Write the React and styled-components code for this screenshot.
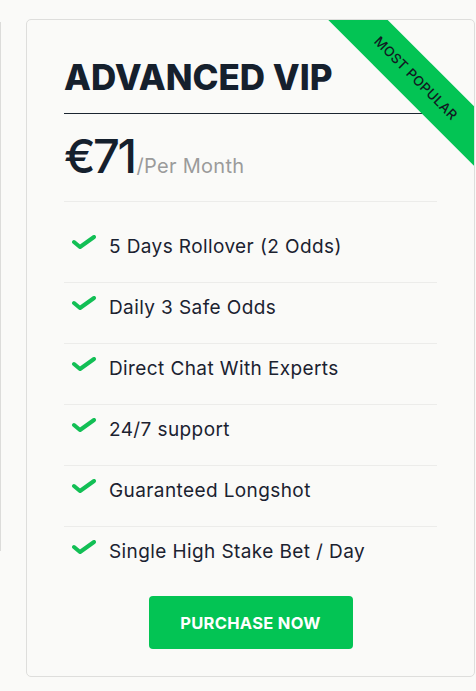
import React from "react";
import styled, { createGlobalStyle } from "styled-components";

const features = [
  "5 Days Rollover (2 Odds)",
  "Daily 3 Safe Odds",
  "Direct Chat With Experts",
  "24/7 support",
  "Guaranteed Longshot",
  "Single High Stake Bet / Day",
];

export default function App() {
  return (
    <>
      <GlobalStyle />
      <Page>
        <PrevCard />
        <Card>
          <Ribbon>MOST POPULAR</Ribbon>
          <Title>ADVANCED VIP</Title>
          <PriceRow>
            <Amount>€71</Amount>
            <Period>/Per Month</Period>
          </PriceRow>
          <FeatureList>
            {features.map((f) => (
              <Feature key={f}>
                <Check viewBox="0 0 26 14">
                  <polyline points="3,7 9,12 23,2" />
                </Check>
                <span>{f}</span>
              </Feature>
            ))}
          </FeatureList>
          <ButtonRow>
            <Button>PURCHASE NOW</Button>
          </ButtonRow>
        </Card>
      </Page>
    </>
  );
}

const GlobalStyle = createGlobalStyle`
  body {
    margin: 0;
    background: #fafaf8;
    font-family: Inter, "Open Sans", sans-serif;
  }
`;

const Page = styled.div`
  display: flex;
  align-items: flex-start;
  padding-top: 19px;
  height: 672px;
`;

const PrevCard = styled.div`
  width: 0;
  height: 529px;
  margin-top: 3px;
  border-right: 1px solid #dcdcda;
`;

const Card = styled.div`
  position: relative;
  overflow: hidden;
  box-sizing: border-box;
  width: 449px;
  height: 658px;
  margin-left: 25px;
  padding: 36px 37px 0 37px;
  background: #fafaf8;
  border: 1px solid #dededc;
  border-radius: 5px;
`;

const Ribbon = styled.div`
  position: absolute;
  top: 37px;
  right: -67px;
  width: 250px;
  height: 42px;
  display: flex;
  align-items: center;
  justify-content: center;
  background: #03c454;
  color: #111a22;
  font-size: 13.5px;
  font-weight: 500;
  letter-spacing: 0.3px;
  transform: rotate(45deg);
`;

const Title = styled.h2`
  margin: 0;
  padding-bottom: 15px;
  border-bottom: 1px solid #1b2530;
  color: #15202d;
  font-size: 35px;
  font-weight: 800;
  line-height: 42px;
  letter-spacing: 0;
`;

const PriceRow = styled.div`
  display: flex;
  align-items: baseline;
  padding: 15px 0 18px;
  border-bottom: 1px solid #ececea;
`;

const Amount = styled.span`
  color: #15202d;
  font-size: 47px;
  font-weight: 500;
  line-height: 54px;
  letter-spacing: -2.5px;
`;

const Period = styled.span`
  margin-left: 2px;
  color: #9b9b9b;
  font-size: 20px;
  letter-spacing: 0.3px;
`;

const FeatureList = styled.ul`
  margin: 20px 0 0;
  padding: 0;
  list-style: none;
`;

const Feature = styled.li`
  display: flex;
  align-items: flex-start;
  height: 61px;
  padding-top: 13px;
  box-sizing: border-box;
  border-bottom: 1px solid #ececea;
  color: #1b2230;
  font-size: 19px;
  line-height: 24px;
  letter-spacing: 0.4px;

  &:last-child {
    border-bottom: none;
  }
`;

const Check = styled.svg`
  width: 26px;
  height: 14px;
  margin: 0 12px 0 7px;
  flex-shrink: 0;
  fill: none;
  stroke: #12bf55;
  stroke-width: 4;
  stroke-linecap: round;
  stroke-linejoin: round;
`;

const ButtonRow = styled.div`
  display: flex;
  justify-content: center;
  padding-top: 8px;
`;

const Button = styled.button`
  width: 204px;
  height: 53px;
  border: none;
  border-radius: 4px;
  background: #03c454;
  color: #fff;
  font-family: Inter, sans-serif;
  font-size: 16.5px;
  font-weight: 700;
  letter-spacing: 0.3px;
  cursor: pointer;
`;
